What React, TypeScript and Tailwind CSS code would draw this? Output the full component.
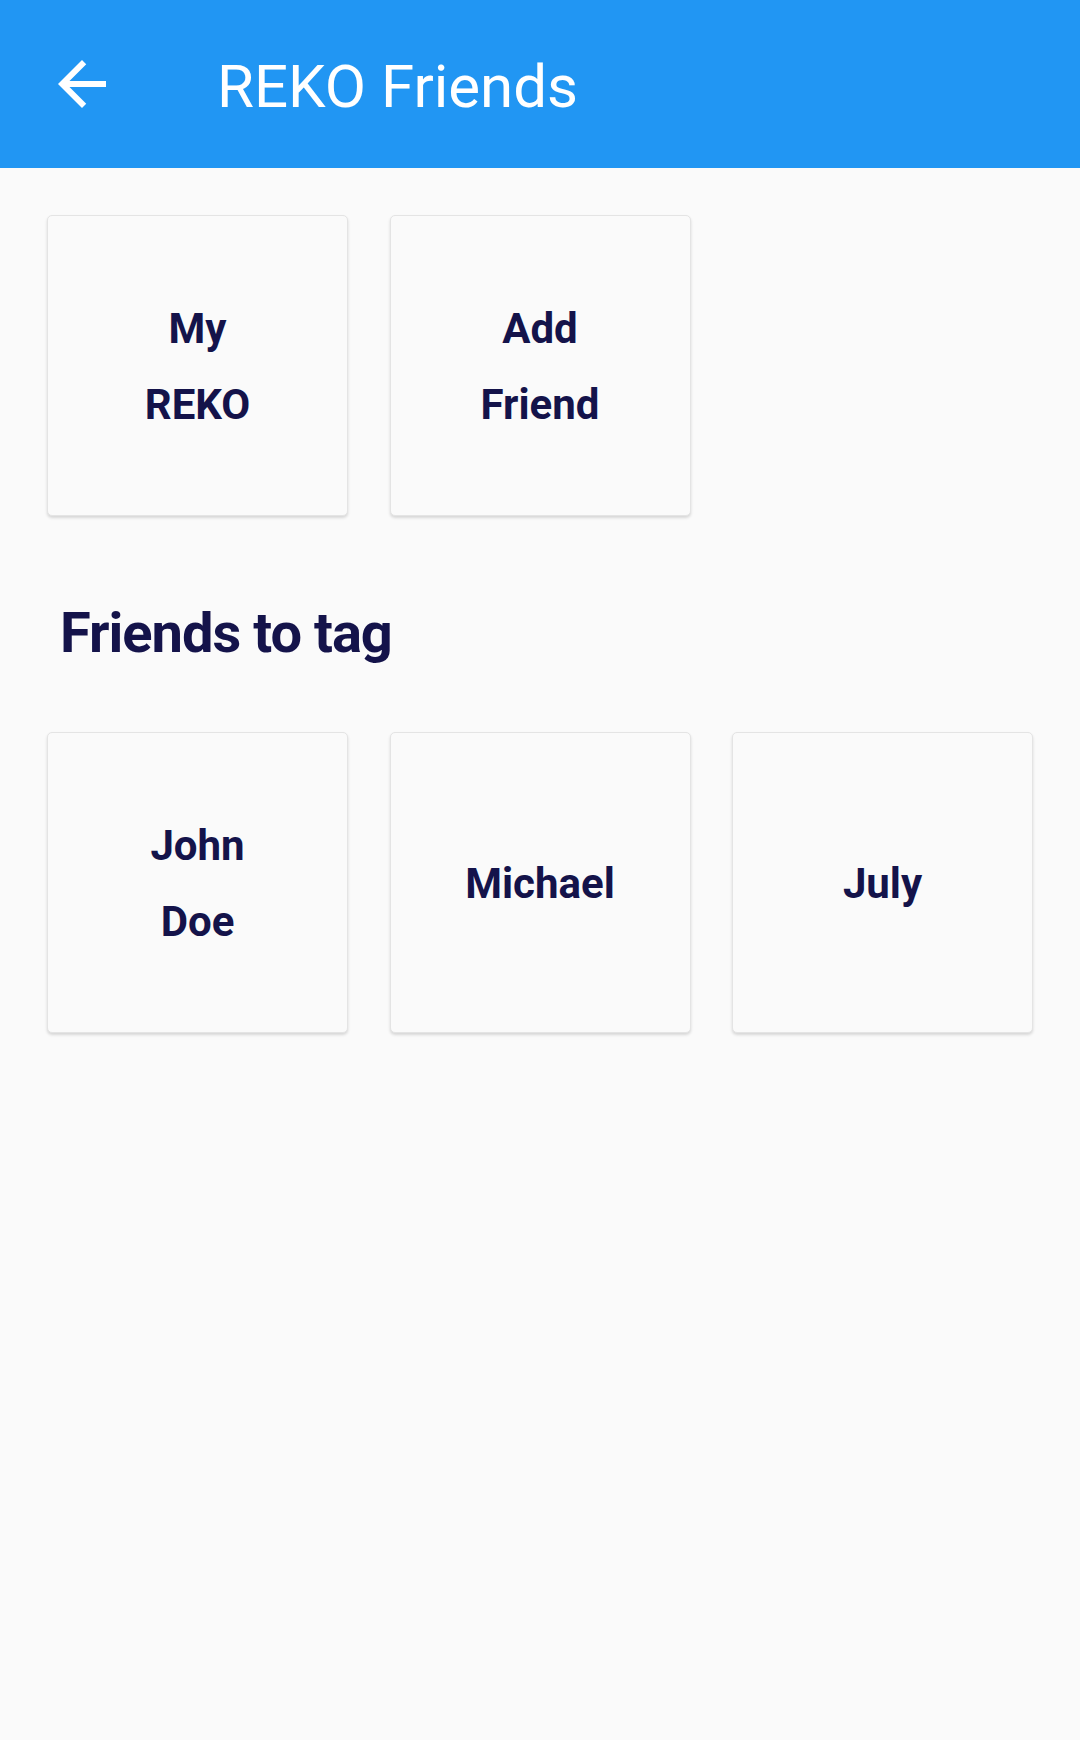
import React from "react";

const topTiles = [["My", "REKO"], ["Add", "Friend"]];
const friends = [["John", "Doe"], ["Michael"], ["July"]];

const Tile: React.FC<{ lines: string[] }> = ({ lines }) => (
    <div className="h-[301px] rounded-[5px] border border-[#e4e4e4] bg-[#fafafa] shadow-[0_2px_3px_rgba(0,0,0,0.14)] flex flex-col items-center justify-center pt-[2px]">
        {lines.map((l) => (
            <span key={l} className="text-[42px] leading-[76px] font-bold text-[#14134a]">
                {l}
            </span>
        ))}
    </div>
);

export default function App() {
    return (
        <div className="w-[1080px] h-[1740px] bg-[#fafafa] font-['Roboto',sans-serif]">
            {/* app bar */}
            <header className="h-[168px] bg-[#2196f3] flex items-center">
                <div className="ml-[46px] w-[72px] h-[72px] flex items-center justify-center">
                    <svg width="72" height="72" viewBox="0 0 24 24" fill="white">
                        <path d="M20 11H7.83l5.59-5.59L12 4l-8 8 8 8 1.41-1.41L7.83 13H20v-2z" />
                    </svg>
                </div>
                <h1 className="ml-[99px] mt-[5px] text-[60px] leading-none font-normal text-white">REKO Friends</h1>
            </header>

            <main className="px-[47px] pt-[47px]">
                <div className="grid grid-cols-3 gap-x-[41.5px]">
                    {topTiles.map((t) => (
                        <Tile key={t.join(" ")} lines={t} />
                    ))}
                </div>

                <h2 className="mt-[89px] mb-[71px] ml-[13px] text-[56px] leading-none tracking-[-1px] font-bold text-[#14134a]">
                    Friends to tag
                </h2>

                <div className="grid grid-cols-3 gap-x-[41.5px]">
                    {friends.map((f) => (
                        <Tile key={f.join(" ")} lines={f} />
                    ))}
                </div>
            </main>
        </div>
    );
}
